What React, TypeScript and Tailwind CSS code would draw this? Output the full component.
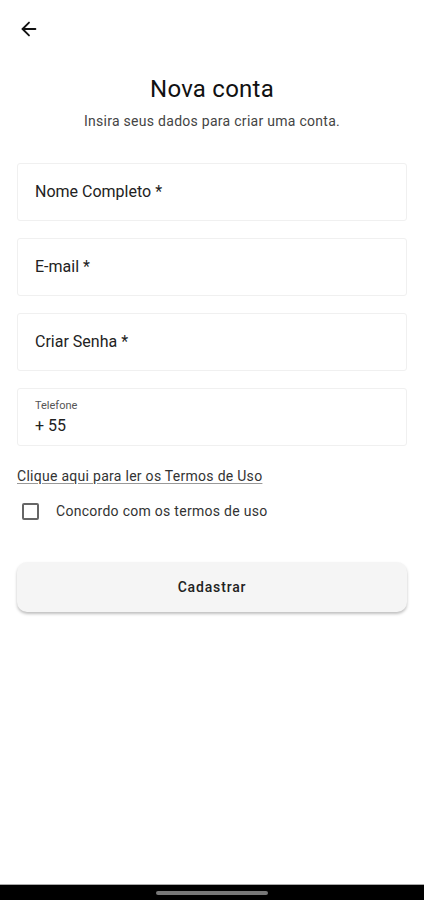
import { ArrowLeft } from "lucide-react";

function Field({ label }: { label: string }) {
  return (
    <div className="h-[58px] rounded-[3px] border border-[#f0f0f0] bg-white px-[17px] flex items-center">
      <span className="text-[16px] text-[#222]">{label}</span>
    </div>
  );
}

export default function App() {
  return (
    <div className="w-[424px] h-[900px] bg-white flex flex-col font-['Roboto',sans-serif] text-[#111]">
      <div className="flex-1 flex flex-col px-[17px]">
        {/* Top bar */}
        <div className="h-[58px] flex items-center">
          <ArrowLeft className="w-[22px] h-[22px] ml-[1px] text-[#111]" strokeWidth={2} />
        </div>

        {/* Header */}
        <h1 className="mt-[16px] text-center text-[24px] leading-[30px] font-normal tracking-[0.01em] text-[#111]">Nova conta</h1>
        <p className="mt-[8px] text-center text-[14px] leading-[18px] tracking-[0.02em] text-[#444]">
          Insira seus dados para criar uma conta.
        </p>

        {/* Fields */}
        <div className="mt-[33px] flex flex-col gap-[17px]">
          <Field label="Nome Completo *" />
          <Field label="E-mail *" />
          <Field label="Criar Senha *" />
          <div className="h-[58px] rounded-[3px] border border-[#f0f0f0] bg-white px-[17px] flex flex-col justify-center">
            <span className="text-[11px] leading-[14px] text-[#555]">Telefone</span>
            <span className="mt-[3px] text-[16px] leading-[20px] text-[#222]">+ 55</span>
          </div>
        </div>

        {/* Terms link */}
        <a className="mt-[21px] text-[14px] leading-[18px] tracking-[0.02em] text-[#333] underline underline-offset-2 decoration-[#999] self-start">
          Clique aqui para ler os Termos de Uso
        </a>

        {/* Checkbox */}
        <label className="mt-[16px] flex items-center">
          <span className="ml-[5px] w-[17px] h-[17px] rounded-[2px] border-2 border-[#666]" />
          <span className="ml-[17px] text-[14px] tracking-[0.02em] text-[#333]">Concordo com os termos de uso</span>
        </label>

        {/* Button */}
        <button className="mt-[40px] h-[50px] w-full rounded-[10px] bg-[#f5f5f5] shadow-[0_2px_3px_rgba(0,0,0,0.25)] text-[14px] font-medium tracking-[0.06em] text-[#222]">
          Cadastrar
        </button>
      </div>

      {/* System nav bar */}
      <div className="h-[16px] bg-black border-t border-[#aaa] flex justify-center items-center">
        <div className="w-[112px] h-[4px] rounded-full bg-[#777]" />
      </div>
    </div>
  );
}
